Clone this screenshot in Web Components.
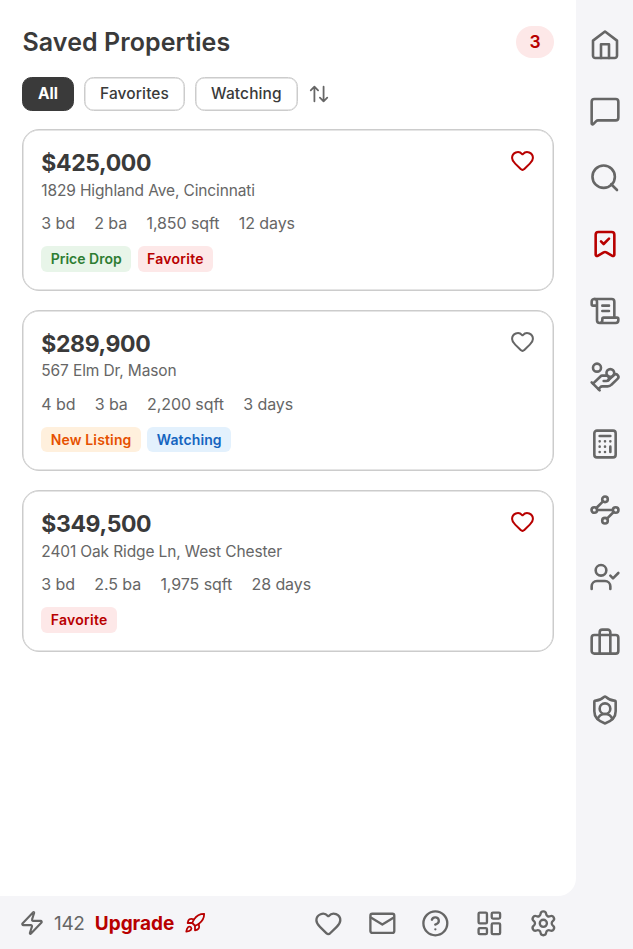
<!DOCTYPE html>
<html lang="en">
<head>
<meta charset="utf-8">
<title>Saved Properties</title>
<style>
	body {
		margin: 0;
		font-family: Inter, "Liberation Sans", sans-serif;
		color: #3a3a3a;
	}
</style>
</head>
<body>
<app-shell>
	<page-header slot="main" count="3">Saved Properties</page-header>
	<filter-bar slot="main">
		<filter-chip active>All</filter-chip>
		<filter-chip>Favorites</filter-chip>
		<filter-chip>Watching</filter-chip>
		<ui-icon name="sort" size="22"></ui-icon>
	</filter-bar>
	<property-card slot="main" price="$425,000" address="1829 Highland Ave, Cincinnati" stats="3 bd|2 ba|1,850 sqft|12 days" favorite>
		<property-tag kind="drop">Price Drop</property-tag>
		<property-tag kind="favorite">Favorite</property-tag>
	</property-card>
	<property-card slot="main" price="$289,900" address="567 Elm Dr, Mason" stats="4 bd|3 ba|2,200 sqft|3 days">
		<property-tag kind="new">New Listing</property-tag>
		<property-tag kind="watching">Watching</property-tag>
	</property-card>
	<property-card slot="main" price="$349,500" address="2401 Oak Ridge Ln, West Chester" stats="3 bd|2.5 ba|1,975 sqft|28 days" favorite>
		<property-tag kind="favorite">Favorite</property-tag>
	</property-card>
	<side-rail slot="rail" active="bookmark"></side-rail>
	<status-bar slot="footer" credits="142"></status-bar>
</app-shell>

<script>
const ICONS = {
	home: '<path d="M12 1.9 3 8.7v11.4a1.7 1.7 0 0 0 1.7 1.7h14.6a1.7 1.7 0 0 0 1.7-1.7V8.7z"/><path d="M9 21.8V11.4h6v10.4"/>',
	chat: '<path d="M22 17a2 2 0 0 1-2 2H6.828a2 2 0 0 0-1.414.586l-2.202 2.202A.71.71 0 0 1 2 21.286V5a2 2 0 0 1 2-2h16a2 2 0 0 1 2 2z"/>',
	search: '<path d="m21 21-4.34-4.34"/><circle cx="11" cy="11" r="8.4"/>',
	bookmark: '<path d="M17 3a2 2 0 0 1 2 2v15a1 1 0 0 1-1.496.868l-4.512-2.578a2 2 0 0 0-1.984 0l-4.512 2.578A1 1 0 0 1 5 20V5a2 2 0 0 1 2-2z"/><path d="m9 10 2 2 4-4"/>',
	scroll: '<path d="M15 12h-5M15 8h-5M19 17V5a2 2 0 0 0-2-2H4"/><path d="M8 21h12a2 2 0 0 0 2-2v-1a1 1 0 0 0-1-1H11a1 1 0 0 0-1 1v1a2 2 0 1 1-4 0V5a2 2 0 1 0-4 0v2a1 1 0 0 0 1 1h3"/>',
	coins: '<path d="M11 15h2a2 2 0 1 0 0-4h-3c-.6 0-1.1.2-1.4.6L3 17"/><path d="m7 21 1.6-1.4c.3-.4.8-.6 1.4-.6h4c1.1 0 2.1-.4 2.8-1.2l4.6-4.4a2 2 0 0 0-2.75-2.91l-4.2 3.9"/><path d="m2 16 6 6"/><circle cx="16" cy="9" r="2.9"/><circle cx="6" cy="5" r="3"/>',
	calculator: '<rect width="16" height="20" x="4" y="2" rx="2"/><path d="M8 6h8M16 14v4M16 10h.01M12 10h.01M8 10h.01M12 14h.01M8 14h.01M12 18h.01M8 18h.01"/>',
	waypoints: '<circle cx="12" cy="4" r="2.1"/><path d="m10.5 5.5-5 5"/><circle cx="4" cy="12" r="2.1"/><path d="M6.1 12h11.8"/><circle cx="20" cy="12" r="2.1"/><path d="m13.5 18.5 5-5"/><circle cx="12" cy="20" r="2.1"/>',
	client: '<path d="m16 11 2 2 4-4"/><path d="M16 21v-2a4 4 0 0 0-4-4H6a4 4 0 0 0-4 4v2"/><circle cx="9" cy="7" r="4"/>',
	briefcase: '<path d="M16 20V4a2 2 0 0 0-2-2h-4a2 2 0 0 0-2 2v16"/><rect width="20" height="14" x="2" y="6" rx="2"/>',
	shield: '<path d="M20 13c0 5-3.5 7.5-7.66 8.95a1 1 0 0 1-.67-.01C7.5 20.5 4 18 4 13V6a1 1 0 0 1 1-1c2 0 4.5-1.2 6.24-2.72a1.17 1.17 0 0 1 1.52 0C14.51 3.81 17 5 19 5a1 1 0 0 1 1 1z"/><path d="M6.376 18.91a6 6 0 0 1 11.249.003"/><circle cx="12" cy="11" r="4"/>',
	heart: '<path d="M2 9.5a5.5 5.5 0 0 1 9.591-3.676.56.56 0 0 0 .818 0A5.49 5.49 0 0 1 22 9.5c0 2.29-1.5 4-3 5.5l-5.492 5.313a2 2 0 0 1-3 .019L5 15c-1.5-1.5-3-3.2-3-5.5"/>',
	mail: '<rect width="20" height="16" x="2" y="4" rx="1.6"/><path d="m2.4 7.2 9.6 5.8 9.6-5.8"/>',
	help: '<circle cx="12" cy="12" r="10"/><path d="M9.09 9a3 3 0 0 1 5.83 1c0 2-3 3-3 3M12 17h.01"/>',
	dashboard: '<rect width="7" height="9" x="3" y="3" rx="1"/><rect width="7" height="5" x="14" y="3" rx="1"/><rect width="7" height="9" x="14" y="12" rx="1"/><rect width="7" height="5" x="3" y="16" rx="1"/>',
	settings: '<path d="M9.671 4.136a2.34 2.34 0 0 1 4.659 0 2.34 2.34 0 0 0 3.319 1.915 2.34 2.34 0 0 1 2.33 4.033 2.34 2.34 0 0 0 0 3.831 2.34 2.34 0 0 1-2.33 4.033 2.34 2.34 0 0 0-3.319 1.915 2.34 2.34 0 0 1-4.659 0 2.34 2.34 0 0 0-3.32-1.915 2.34 2.34 0 0 1-2.33-4.033 2.34 2.34 0 0 0 0-3.831A2.34 2.34 0 0 1 6.35 6.051a2.34 2.34 0 0 0 3.319-1.915"/><circle cx="12" cy="12" r="3"/>',
	sort: '<path d="m21 16-4 4-4-4M17 20V4M3 8l4-4 4 4M7 4v16"/>',
	zap: '<path d="M4 14a1 1 0 0 1-.78-1.63l9.9-10.2a.5.5 0 0 1 .86.46l-1.92 6.02A1 1 0 0 0 13 10h7a1 1 0 0 1 .78 1.63l-9.9 10.2a.5.5 0 0 1-.86-.46l1.92-6.02A1 1 0 0 0 11 14z"/>',
	rocket: '<path d="M4.5 16.5c-1.5 1.26-2 5-2 5s3.74-.5 5-2c.71-.84.7-2.13-.09-2.91a2.18 2.18 0 0 0-2.91-.09z"/><path d="m12 15-3-3a22 22 0 0 1 2-3.95A12.88 12.88 0 0 1 22 2c0 2.72-.78 7.5-6 11a22.35 22.35 0 0 1-4 2z"/><path d="M9 12H4s.55-3.03 2-4c1.62-1.08 5 0 5 0M12 15v5s3.03-.55 4-2c1.08-1.62 0-5 0-5"/>',
};

class UiIcon extends HTMLElement {
	constructor() {
		super();

		const shadow = this.attachShadow({ mode: "open" });
		const size = this.getAttribute("size") || "24";

		shadow.innerHTML = `
			<style>
				:host { display: block; flex: none; width: ${size}px; height: ${size}px; color: #666; }
				:host([red]) { color: #b80000; }
				svg { display: block; width: 100%; height: 100%; overflow: visible; }
			</style>
			<svg viewBox="0 0 24 24" fill="none" stroke="currentColor" stroke-width="1.95" stroke-linecap="round" stroke-linejoin="round">${ICONS[this.getAttribute("name")]}</svg>
		`;
	}
}

class AppShell extends HTMLElement {
	constructor() {
		super();

		this.attachShadow({ mode: "open" }).innerHTML = `
			<style>
				:host {
					display: grid;
					grid-template: 895.5px 1fr / 576px 1fr;
					height: 949px;
					overflow: hidden;
					background: #f5f5f8;
				}
				main {
					box-sizing: border-box;
					padding: 26px 22px 0;
					background: #fff;
					border-bottom-right-radius: 18px;
				}
			</style>
			<main><slot name="main"></slot></main>
			<slot name="rail"></slot>
			<slot name="footer"></slot>
		`;
	}
}

class PageHeader extends HTMLElement {
	constructor() {
		super();

		this.attachShadow({ mode: "open" }).innerHTML = `
			<style>
				:host { display: flex; justify-content: space-between; align-items: center; height: 31.5px; }
				h1 { margin: 0 0 0 .5px; font-size: 25px; font-weight: 600; line-height: 32px; letter-spacing: .08px; }
				.count {
					width: 38px;
					height: 31.5px;
					border-radius: 16px;
					background: #fde8e8;
					color: #b80000;
					font-size: 17.5px;
					font-weight: 600;
					line-height: 31.5px;
					text-align: center;
				}
			</style>
			<h1><slot></slot></h1>
			<span class="count">${this.getAttribute("count")}</span>
		`;
	}
}

class FilterBar extends HTMLElement {
	constructor() {
		super();

		this.attachShadow({ mode: "open" }).innerHTML = `
			<style>
				:host { display: flex; align-items: center; gap: 10px; height: 33.5px; margin: 19.5px 0 18.9px; }
			</style>
			<slot></slot>
		`;
	}
}

class FilterChip extends HTMLElement {
	constructor() {
		super();

		this.attachShadow({ mode: "open" }).innerHTML = `
			<style>
				:host {
					box-sizing: border-box;
					height: 33.5px;
					padding: 0 15px;
					border: 1px solid #ccc;
					border-radius: 9.5px;
					box-shadow: inset 0 0 0 .5px #ccc;
					font-size: 15.5px;
					font-weight: 500;
					line-height: 31.5px;
					letter-spacing: .12px;
				}
				:host([active]) {
					background: #3a3a3a;
					border-color: #3a3a3a;
					box-shadow: none;
					color: #fff;
					font-weight: 700;
					letter-spacing: 0;
				}
			</style>
			<slot></slot>
		`;
	}
}

class PropertyCard extends HTMLElement {
	constructor() {
		super();

		const stats = this.getAttribute("stats").split("|");

		this.attachShadow({ mode: "open" }).innerHTML = `
			<style>
				:host {
					display: block;
					box-sizing: border-box;
					height: 161.5px;
					margin-bottom: 19px;
					padding: 18px 18px 0 18.3px;
					border: 1px solid #ccc;
					border-radius: 17px;
					box-shadow: inset 0 0 0 .5px #ccc;
				}
				.top { display: flex; justify-content: space-between; height: 28.6px; }
				.price { font-size: 23px; font-weight: 700; line-height: 30.6px; letter-spacing: -.38px; }
				.address { height: 23px; color: #666; font-size: 15.5px; line-height: 27.4px; letter-spacing: -.13px; }
				.stats { display: flex; gap: 19.3px; margin-top: 12.4px; color: #666; font-size: 16px; line-height: 23px; letter-spacing: -.08px; }
				.tags { display: flex; gap: 6.5px; margin-top: 11px; }
			</style>
			<div class="top">
				<span class="price">${this.getAttribute("price")}</span>
				<ui-icon name="heart" size="25" ${this.hasAttribute("favorite") ? "red" : ""}></ui-icon>
			</div>
			<div class="address">${this.getAttribute("address")}</div>
			<div class="stats">${stats.map((s) => `<span>${s}</span>`).join("")}</div>
			<div class="tags"><slot></slot></div>
		`;
	}
}

class PropertyTag extends HTMLElement {
	constructor() {
		super();

		this.attachShadow({ mode: "open" }).innerHTML = `
			<style>
				:host {
					height: 25.5px;
					padding: 0 9.4px;
					border-radius: 6px;
					font-size: 14px;
					font-weight: 600;
					line-height: 25.5px;
				}
				:host([kind="drop"]) { background: #e8f5e9; color: #2e7d32; }
				:host([kind="favorite"]) { background: #fde8e8; color: #b80000; letter-spacing: .27px; }
				:host([kind="new"]) { background: #fff0dd; color: #e65100; letter-spacing: .15px; }
				:host([kind="watching"]) { background: #e3f1fd; color: #1565c0; letter-spacing: .1px; }
			</style>
			<slot></slot>
		`;
	}
}

class SideRail extends HTMLElement {
	constructor() {
		super();

		const names = ["home", "chat", "search", "bookmark", "scroll", "coins", "calculator", "waypoints", "client", "briefcase", "shield"];
		const active = this.getAttribute("active");

		this.attachShadow({ mode: "open" }).innerHTML = `
			<style>
				:host { display: flex; flex-direction: column; align-items: center; gap: 34.5px; padding: 28.7px 0 0 .5px; }
			</style>
			${names.map((n) => `<ui-icon name="${n}" size="32" ${n === active ? "red" : ""}></ui-icon>`).join("")}
		`;
	}
}

class StatusBar extends HTMLElement {
	constructor() {
		super();

		this.attachShadow({ mode: "open" }).innerHTML = `
			<style>
				:host { display: flex; align-items: center; grid-column: 1 / -1; padding: 1.6px 75.2px 0 18.5px; font-size: 19px; }
				.credits { margin-left: 9.5px; color: #666; letter-spacing: -.35px; }
				.upgrade { display: flex; align-items: center; gap: 9.5px; margin-left: 10.3px; color: #b80000; font-weight: 700; letter-spacing: -.05px; }
				nav { display: flex; gap: 25.2px; margin-left: auto; }
			</style>
			<ui-icon name="zap" size="26"></ui-icon>
			<span class="credits">${this.getAttribute("credits")}</span>
			<span class="upgrade"><span>Upgrade</span><ui-icon name="rocket" size="22" red></ui-icon></span>
			<nav>
				${["heart", "mail", "help", "dashboard", "settings"].map((n) => `<ui-icon name="${n}" size="28.7"></ui-icon>`).join("")}
			</nav>
		`;
	}
}

customElements.define("ui-icon", UiIcon);
customElements.define("app-shell", AppShell);
customElements.define("page-header", PageHeader);
customElements.define("filter-bar", FilterBar);
customElements.define("filter-chip", FilterChip);
customElements.define("property-card", PropertyCard);
customElements.define("property-tag", PropertyTag);
customElements.define("side-rail", SideRail);
customElements.define("status-bar", StatusBar);
</script>
</body>
</html>
